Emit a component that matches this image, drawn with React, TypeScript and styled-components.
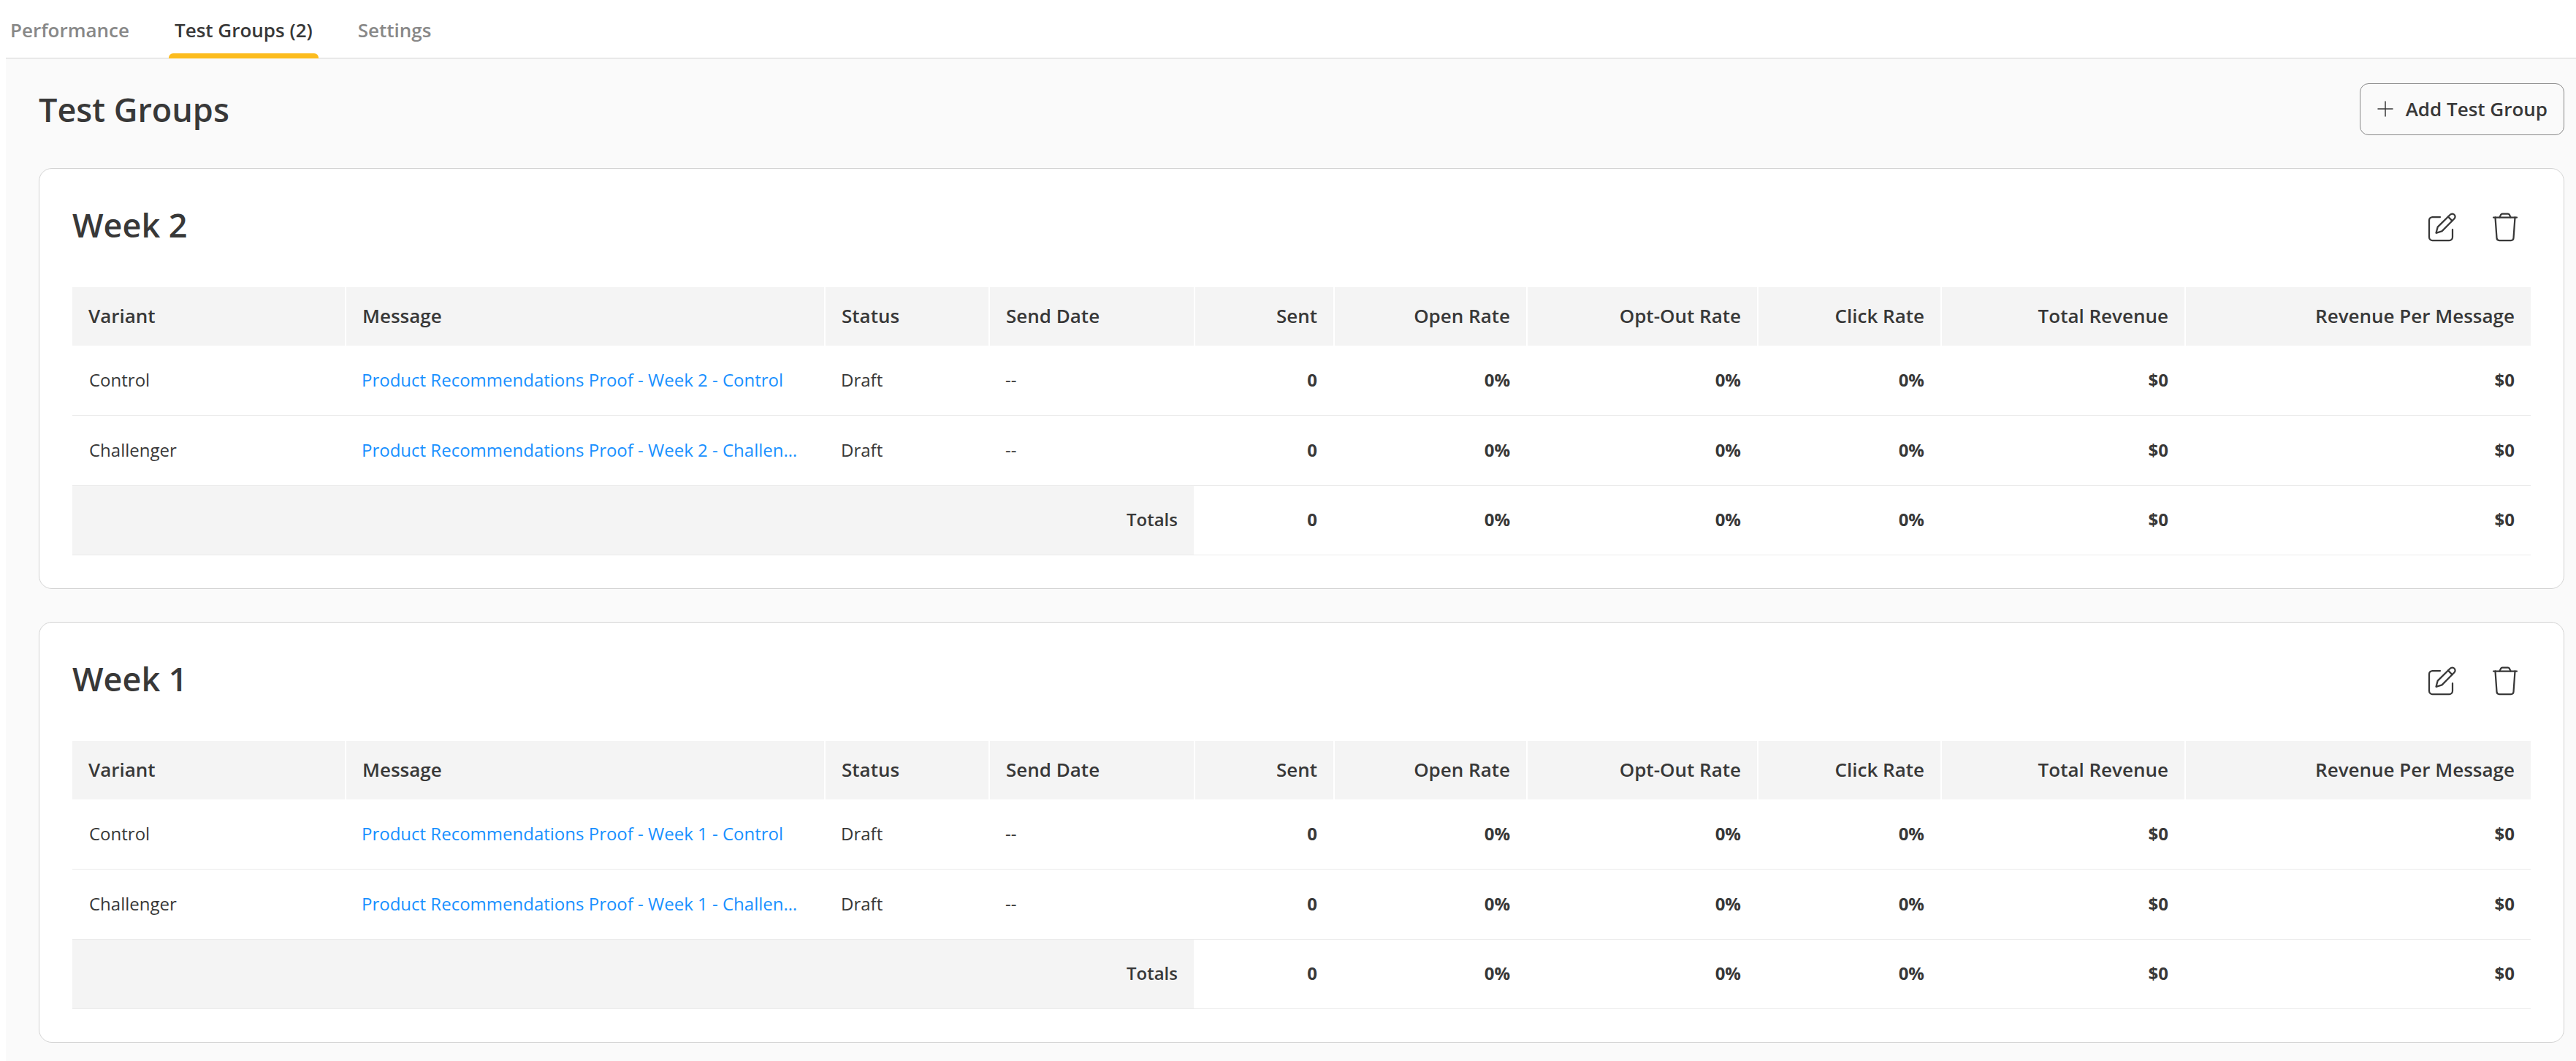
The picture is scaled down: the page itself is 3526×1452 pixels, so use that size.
import React from "react";
import styled, { createGlobalStyle } from "styled-components";

const color = {
  text: "#383838",
  muted: "#888888",
  link: "#1890ff",
  accent: "#fcbc1e",
  page: "#fafafa",
  fill: "#f4f4f4",
  edge: "#d3d3d3",
  rule: "#ebebeb",
};

const GlobalStyle = createGlobalStyle`
  *, *::before, *::after { box-sizing: border-box; }
  body {
    margin: 0;
    background: #ffffff;
    color: ${color.text};
    font-family: "Open Sans", "Noto Sans", sans-serif;
    font-size: 24px;
    line-height: 36px;
  }
`;

const Screen = styled.div`
  display: flex;
  flex-direction: column;
  min-height: 100vh;
`;

const Tabs = styled.nav`
  display: flex;
  gap: 46px;
  height: 79px;
  padding-left: 6px;
`;

const Tab = styled.a<{ $active?: boolean }>`
  position: relative;
  display: flex;
  align-items: center;
  padding: 2px 8px 0;
  font-size: 26px;
  font-weight: 600;
  color: ${(p) => (p.$active ? color.text : color.muted)};
  text-decoration: none;

  &::after {
    content: "";
    display: ${(p) => (p.$active ? "block" : "none")};
    position: absolute;
    left: 0;
    right: 0;
    bottom: -1px;
    height: 7px;
    border-radius: 6px 6px 0 0;
    background: ${color.accent};
  }
`;

const Main = styled.main`
  flex: 1;
  display: flex;
  flex-direction: column;
  gap: 45px;
  margin-left: 8px;
  padding: 34px 16px 25px 45px;
  border-top: 1px solid ${color.edge};
  background: ${color.page};
`;

const PageHeader = styled.header`
  display: flex;
  align-items: center;
  justify-content: space-between;
`;

const PageTitle = styled.h1`
  margin: 0;
  font-size: 45px;
  line-height: 63px;
  font-weight: 600;
`;

const AddButton = styled.button`
  display: flex;
  align-items: center;
  gap: 16px;
  height: 71px;
  padding: 0 22px 2px;
  border: 1px solid ${color.muted};
  border-radius: 12px;
  background: transparent;
  color: inherit;
  font: inherit;
  font-size: 26px;
  font-weight: 600;
  cursor: pointer;
`;

const Card = styled.section`
  padding: 45px;
  border: 1px solid ${color.edge};
  border-radius: 18px;
  background: #ffffff;
`;

const CardHeader = styled.header`
  display: flex;
  align-items: flex-start;
  justify-content: space-between;
  margin-bottom: 47px;
`;

const CardTitle = styled(PageTitle).attrs({ as: "h2" })``;

const Actions = styled.div`
  display: flex;
  gap: 16px;
`;

const IconButton = styled.button`
  display: grid;
  place-items: center;
  width: 70px;
  height: 70px;
  padding: 0;
  border: 0;
  background: transparent;
  color: inherit;
  cursor: pointer;
`;

const Table = styled.table`
  width: 100%;
  table-layout: fixed;
  border-collapse: separate;
  border-spacing: 0;
`;

const HeadCell = styled.th<{ $end?: boolean }>`
  height: 80px;
  padding: 0 22px 2px;
  background: ${color.fill};
  font-size: 26px;
  font-weight: 600;
  text-align: ${(p) => (p.$end ? "right" : "left")};
  white-space: nowrap;

  & + & {
    border-left: 2px solid #ffffff;
  }
`;

const Cell = styled.td<{ $end?: boolean }>`
  height: 96px;
  padding: 0 22px 2px 23px;
  border-bottom: 1px solid ${color.rule};
  font-weight: ${(p) => (p.$end ? 700 : 400)};
  text-align: ${(p) => (p.$end ? "right" : "left")};
  white-space: nowrap;

  tfoot & {
    height: 95px;
  }
`;

const MessageCell = styled(Cell)`
  padding-right: 28px;
`;

const TotalsLabel = styled.th`
  height: 95px;
  padding: 0 22px 2px;
  border-bottom: 1px solid ${color.rule};
  background: ${color.fill};
  font-weight: 600;
  text-align: right;
`;

const MessageLink = styled.a`
  display: block;
  overflow: hidden;
  color: ${color.link};
  text-decoration: none;
  text-overflow: ellipsis;
`;

const PlusIcon = () => (
  <svg width="24" height="24" viewBox="0 0 24 24" fill="none" stroke="currentColor" strokeWidth="1.5" strokeLinecap="round" aria-hidden="true">
    <path d="M12 2v20M2 12h20" />
  </svg>
);

const EditIcon = () => (
  <svg width="40" height="40" viewBox="0 0 40 40" fill="none" stroke="currentColor" strokeWidth="2.25" strokeLinecap="round" strokeLinejoin="round" aria-hidden="true">
    <path d="M17 6H6.500a4.500 4.500 0 0 0-4.500 4.500v23a4.500 4.500 0 0 0 4.500 4.500h23a4.500 4.500 0 0 0 4.500-4.500V23" />
    <path d="M11.500 27.800l2.200-8.200L30.800 2.700a3.900 3.900 0 0 1 5.600 0 3.900 3.900 0 0 1 0 5.600L19.500 25.400z" />
    <path d="M28 5.600l5.600 5.600" />
  </svg>
);

const TrashIcon = () => (
  <svg width="40" height="40" viewBox="0 0 40 40" fill="none" stroke="currentColor" strokeWidth="2.25" strokeLinecap="round" strokeLinejoin="round" aria-hidden="true">
    <path d="M4 6.500h32" />
    <path d="M12.500 6.500l1.700-3.700c.4-.9 1-1.300 2-1.300h7.600c1 0 1.600.4 2 1.300l1.700 3.700" />
    <path d="M6.500 6.500l2 28.200A3.500 3.500 0 0 0 12 38h16a3.500 3.500 0 0 0 3.500-3.300l2-28.200" />
  </svg>
);

const columns = [
  { label: "Variant", share: 373 },
  { label: "Message", share: 656 },
  { label: "Status", share: 225 },
  { label: "Send Date", share: 281 },
  { label: "Sent", share: 191, numeric: true },
  { label: "Open Rate", share: 264, numeric: true },
  { label: "Opt-Out Rate", share: 316, numeric: true },
  { label: "Click Rate", share: 251, numeric: true },
  { label: "Total Revenue", share: 334, numeric: true },
  { label: "Revenue Per Message", share: 474, numeric: true },
];

const totalShare = columns.reduce((sum, c) => sum + c.share, 0);

const emptyStats = ["0", "0%", "0%", "0%", "$0", "$0"];

const variants = ["Control", "Challenger"];

function TestGroup({ name }: { name: string }) {
  return (
    <Card>
      <CardHeader>
        <CardTitle>{name}</CardTitle>
        <Actions>
          <IconButton type="button" aria-label={`Edit ${name}`}>
            <EditIcon />
          </IconButton>
          <IconButton type="button" aria-label={`Delete ${name}`}>
            <TrashIcon />
          </IconButton>
        </Actions>
      </CardHeader>
      <Table>
        <colgroup>
          {columns.map((c) => (
            <col key={c.label} style={{ width: `${(c.share / totalShare) * 100}%` }} />
          ))}
        </colgroup>
        <thead>
          <tr>
            {columns.map((c) => (
              <HeadCell key={c.label} scope="col" $end={c.numeric}>
                {c.label}
              </HeadCell>
            ))}
          </tr>
        </thead>
        <tbody>
          {variants.map((variant) => (
            <tr key={variant}>
              <Cell>{variant}</Cell>
              <MessageCell>
                <MessageLink href="#">
                  Product Recommendations Proof - {name} - {variant}
                </MessageLink>
              </MessageCell>
              <Cell>Draft</Cell>
              <Cell>--</Cell>
              {emptyStats.map((value, i) => (
                <Cell key={i} $end>
                  {value}
                </Cell>
              ))}
            </tr>
          ))}
        </tbody>
        <tfoot>
          <tr>
            <TotalsLabel scope="row" colSpan={4}>
              Totals
            </TotalsLabel>
            {emptyStats.map((value, i) => (
              <Cell key={i} $end>
                {value}
              </Cell>
            ))}
          </tr>
        </tfoot>
      </Table>
    </Card>
  );
}

export default function App() {
  return (
    <Screen>
      <GlobalStyle />
      <Tabs aria-label="Sections">
        <Tab href="#">Performance</Tab>
        <Tab href="#" $active aria-current="page">
          Test Groups (2)
        </Tab>
        <Tab href="#">Settings</Tab>
      </Tabs>
      <Main>
        <PageHeader>
          <PageTitle>Test Groups</PageTitle>
          <AddButton type="button">
            <PlusIcon />
            Add Test Group
          </AddButton>
        </PageHeader>
        <TestGroup name="Week 2" />
        <TestGroup name="Week 1" />
      </Main>
    </Screen>
  );
}
